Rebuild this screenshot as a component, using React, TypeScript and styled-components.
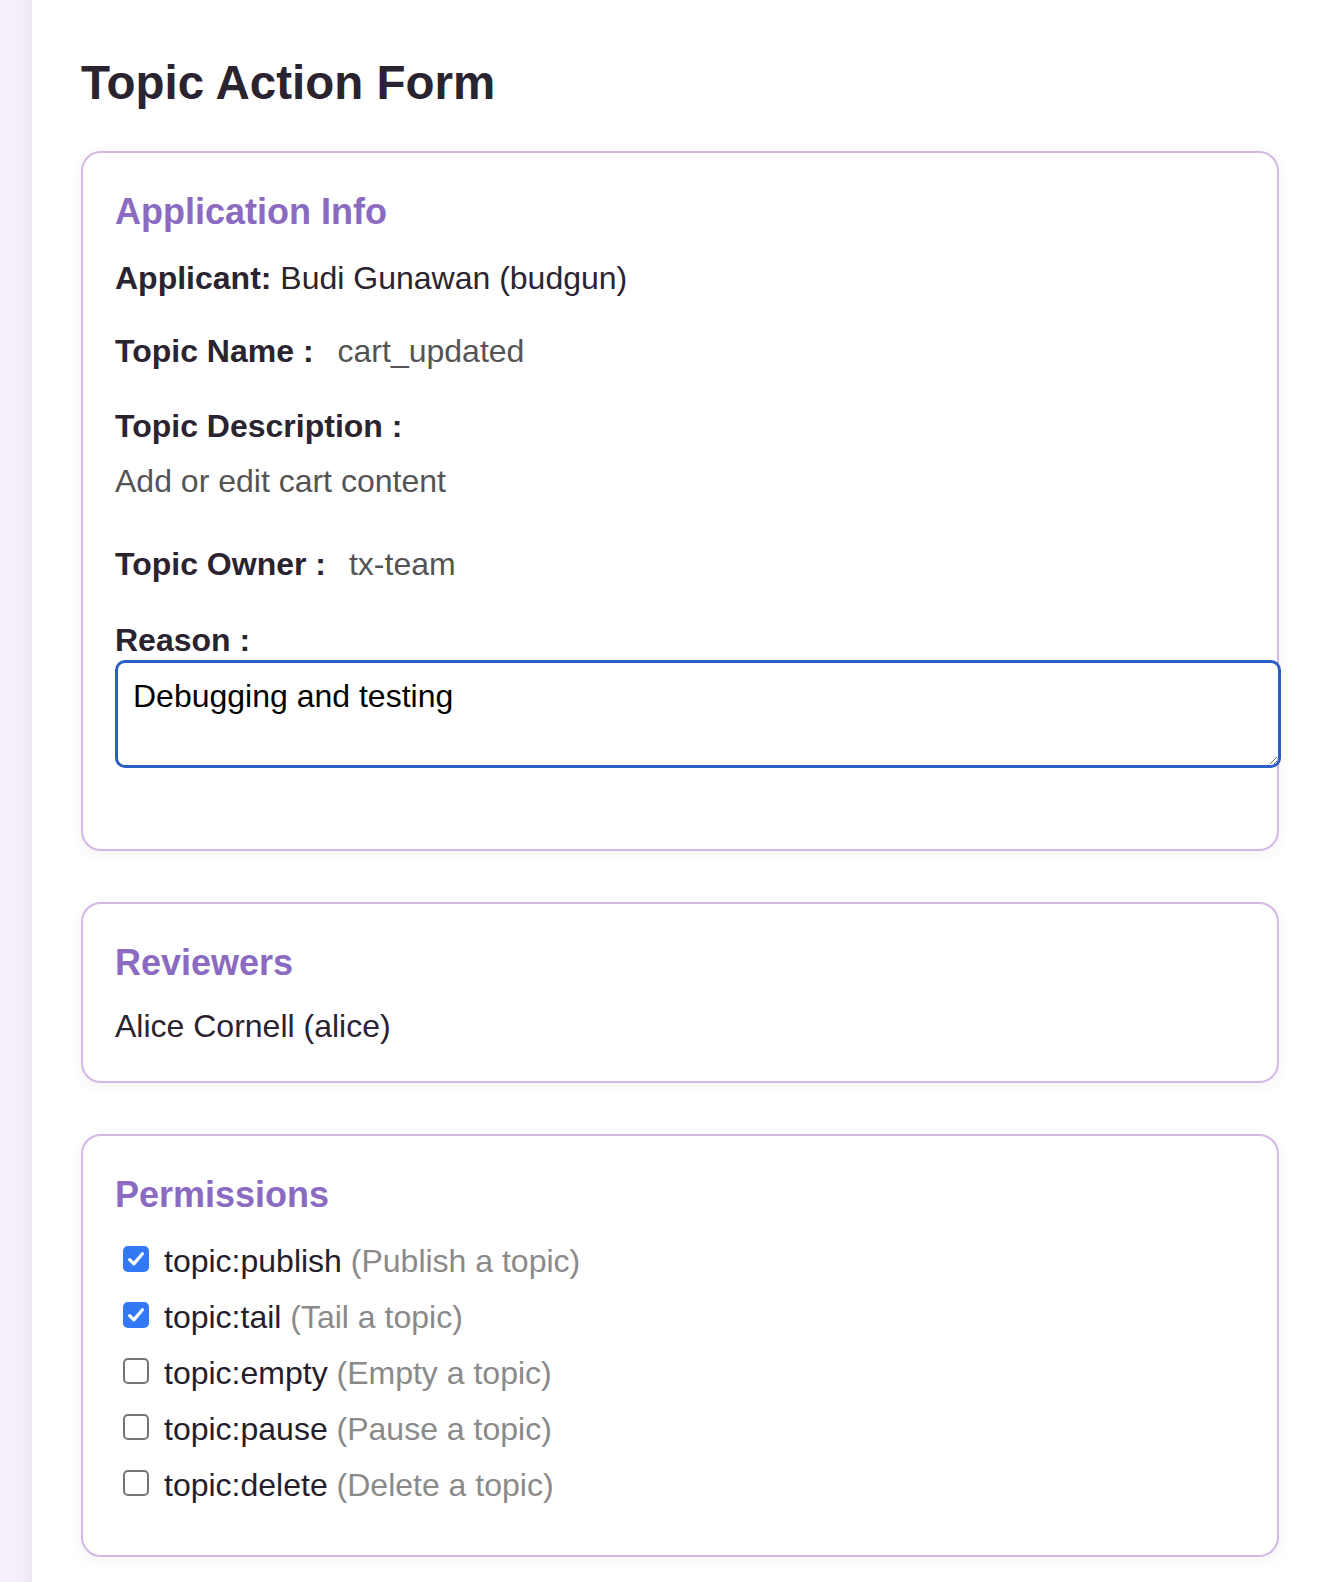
import React, { useEffect, useRef } from "react";
import styled, { createGlobalStyle } from "styled-components";

const GlobalStyle = createGlobalStyle`
  html, body {
    margin: 0;
    padding: 0;
    background: #ffffff;
  }
  body {
    font-family: "Liberation Sans", Arial, Helvetica, sans-serif;
    color: #2a2330;
  }
  *, *::before, *::after {
    box-sizing: border-box;
  }
`;

const Page = styled.div`
  display: flex;
  min-height: 100vh;
`;

const Sidebar = styled.aside`
  width: 32px;
  flex-shrink: 0;
  background: linear-gradient(to right, #f6f1fb 0%, #f3edf9 70%, #ece5f2 100%);
`;

const Main = styled.main`
  flex: 1;
  min-width: 0;
  padding: 55px 43px 20px 49px;
`;

const Title = styled.h1`
  margin: 0 0 40px;
  font-size: 47.5px;
  line-height: 56px;
  font-weight: 700;
  color: #2a2330;
`;

const Card = styled.section`
  background: #ffffff;
  border: 2px solid #d3b7e5;
  border-radius: 20px;
  padding: 38px 32px 32px;
  box-shadow: 0 3px 14px rgba(90, 60, 130, 0.07);
  margin-bottom: 51px;

  &:last-child {
    margin-bottom: 0;
  }
`;

const SectionTitle = styled.h2<{ $gap: number }>`
  margin: 0 0 ${(p) => p.$gap}px;
  font-size: 36px;
  line-height: 42px;
  font-weight: 700;
  color: #8a6bc1;
`;

const Line = styled.div<{ $mb: number }>`
  display: flex;
  align-items: baseline;
  margin: 0 0 ${(p) => p.$mb}px;
  font-size: 32px;
  line-height: 36px;
  color: #2a2330;
`;

const Label = styled.span`
  font-weight: 700;
  white-space: pre;
`;

const Value = styled.span<{ $offset?: number }>`
  margin-left: ${(p) => p.$offset ?? 0}px;
  color: #545454;
`;

const Plain = styled.span`
  white-space: pre;
`;

const ReasonBox = styled.textarea`
  display: block;
  width: calc(100% + 36px);
  height: 108px;
  margin: 0 0 49px;
  padding: 15px 15px;
  border: 3px solid #2b5fc6;
  border-radius: 10px;
  outline: none;
  font-family: "Liberation Sans", Arial, Helvetica, sans-serif;
  font-size: 32px;
  line-height: normal;
  color: #000000;
  caret-color: #000000;
  background: #ffffff;
`;

const PermList = styled.div`
  display: flex;
  flex-direction: column;
`;

const PermRow = styled.label`
  display: flex;
  align-items: flex-start;
  margin-bottom: 20px;
  font-size: 32px;
  line-height: 36px;
  color: #241e2c;
  cursor: pointer;
`;

const HiddenInput = styled.input`
  position: absolute;
  opacity: 0;
  width: 0;
  height: 0;
  margin: 0;
`;

const Box = styled.span<{ $checked: boolean }>`
  display: flex;
  align-items: center;
  justify-content: center;
  flex-shrink: 0;
  width: 26px;
  height: 26px;
  margin: 3px 15px 0 8px;
  border-radius: 5px;
  background: ${(p) => (p.$checked ? "#3179f5" : "#ffffff")};
  border: ${(p) => (p.$checked ? "none" : "2px solid #747474")};
`;

const PermDesc = styled.span`
  color: #8a8a8a;
  white-space: pre;
`;

const PermName = styled.span`
  white-space: pre;
`;

const permissions = [
  { name: "topic:publish", desc: "Publish a topic", checked: true },
  { name: "topic:tail", desc: "Tail a topic", checked: true },
  { name: "topic:empty", desc: "Empty a topic", checked: false },
  { name: "topic:pause", desc: "Pause a topic", checked: false },
  { name: "topic:delete", desc: "Delete a topic", checked: false },
];

function Check() {
  return (
    <svg width="26" height="26" viewBox="0 0 26 26" aria-hidden="true">
      <path
        d="M6.6 13.6 L10.9 17.9 L19.4 7.8"
        fill="none"
        stroke="#ffffff"
        strokeWidth="3.2"
        strokeLinecap="round"
        strokeLinejoin="round"
      />
    </svg>
  );
}

export default function App() {
  const ref = useRef<HTMLTextAreaElement>(null);

  useEffect(() => {
    const el = ref.current;
    if (el) {
      el.focus();
      const len = el.value.length;
      el.setSelectionRange(len, len);
    }
  }, []);

  return (
    <>
      <GlobalStyle />
      <Page>
        <Sidebar />
        <Main>
          <Title>Topic Action Form</Title>

          <Card>
            <SectionTitle $gap={27}>Application Info</SectionTitle>
            <Line $mb={37}>
              <Label>Applicant:</Label>
              <Plain> Budi Gunawan (budgun)</Plain>
            </Line>
            <Line $mb={39}>
              <Label>Topic Name :</Label>
              <Value $offset={24}>cart_updated</Value>
            </Line>
            <Line $mb={19}>
              <Label>Topic Description :</Label>
            </Line>
            <Line $mb={47}>
              <Value>Add or edit cart content</Value>
            </Line>
            <Line $mb={40}>
              <Label>Topic Owner :</Label>
              <Value $offset={23}>tx-team</Value>
            </Line>
            <Line $mb={2}>
              <Label>Reason :</Label>
            </Line>
            <ReasonBox ref={ref} defaultValue="Debugging and testing" />
          </Card>

          <Card>
            <SectionTitle $gap={24}>Reviewers</SectionTitle>
            <Line $mb={5}>
              <Plain>Alice Cornell (alice)</Plain>
            </Line>
          </Card>

          <Card>
            <SectionTitle $gap={27}>Permissions</SectionTitle>
            <PermList>
              {permissions.map((p) => (
                <PermRow key={p.name}>
                  <HiddenInput type="checkbox" defaultChecked={p.checked} />
                  <Box $checked={p.checked}>{p.checked && <Check />}</Box>
                  <PermName>{p.name} </PermName>
                  <PermDesc>({p.desc})</PermDesc>
                </PermRow>
              ))}
            </PermList>
          </Card>
        </Main>
      </Page>
    </>
  );
}
